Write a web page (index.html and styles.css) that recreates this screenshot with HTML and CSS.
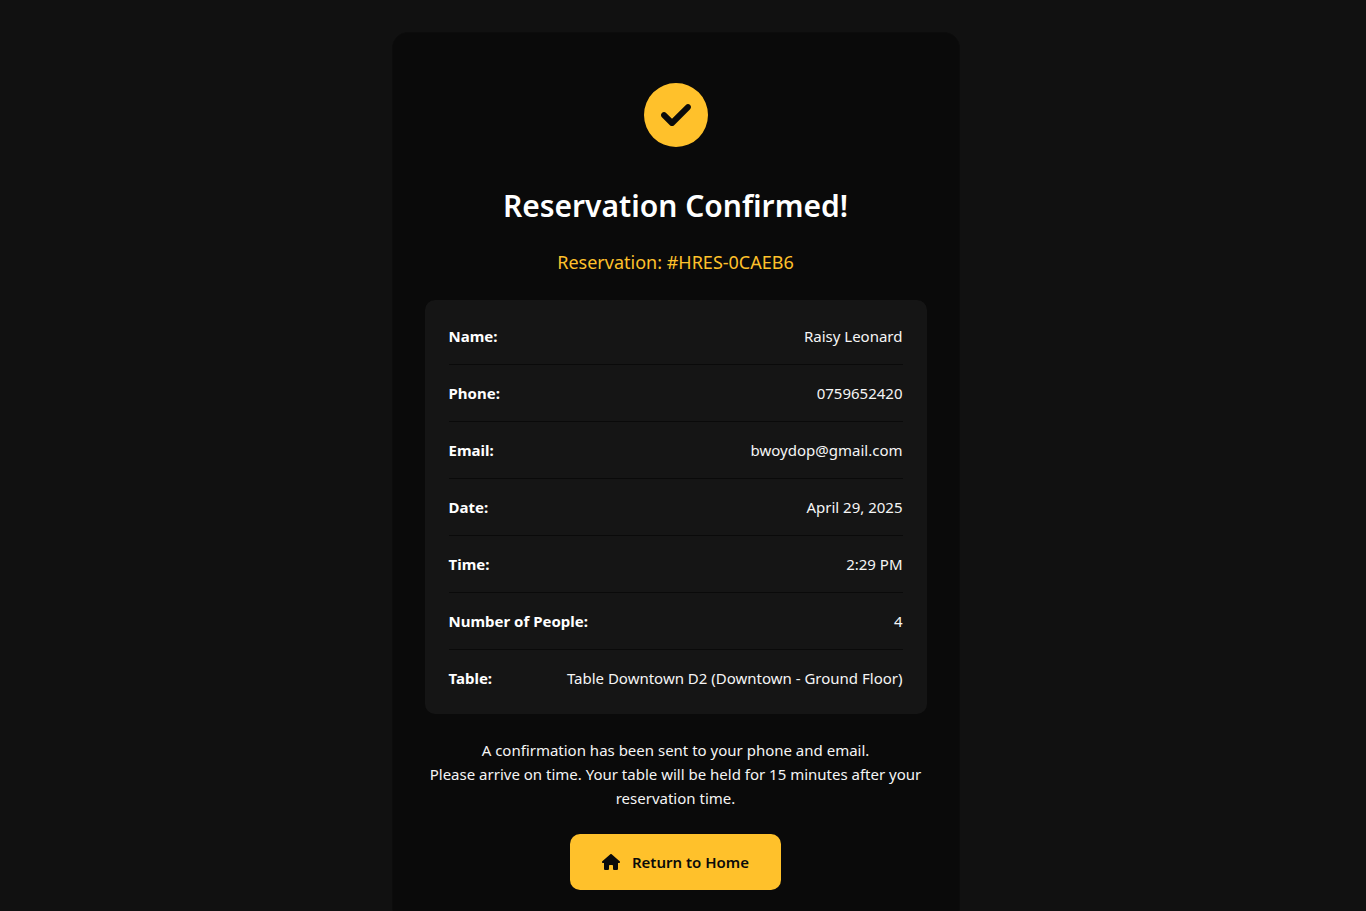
FILE: index.html
```html
<!DOCTYPE html>
<html lang="en">
<head>
  <meta charset="UTF-8">
  <title>Reservation Confirmed</title>
  <meta name="viewport" content="width=device-width, initial-scale=1">
  <link rel="stylesheet" href="styles.css">
</head>
<body>

<main class="confirmation">
  <!-- Success icon -->
  <div class="success-icon">
    <svg viewBox="0 0 512 512" aria-hidden="true">
      <path d="M256 512A256 256 0 1 0 256 0a256 256 0 1 0 0 512zM369 209L241 337c-9.4 9.4-24.6 9.4-33.9 0l-64-64c-9.4-9.4-9.4-24.6 0-33.9s24.6-9.4 33.9 0l47 47L335 175c9.4-9.4 24.6-9.4 33.9 0s9.4 24.6 0 33.9z"/>
    </svg>
  </div>

  <h1>Reservation Confirmed!</h1>
  <p class="reservation-id">Reservation: #HRES-0CAEB6</p>

  <!-- Reservation details -->
  <dl class="details">
    <div class="detail-row">
      <dt>Name:</dt>
      <dd>Raisy Leonard</dd>
    </div>
    <div class="detail-row">
      <dt>Phone:</dt>
      <dd>0759652420</dd>
    </div>
    <div class="detail-row">
      <dt>Email:</dt>
      <dd>bwoydop@gmail.com</dd>
    </div>
    <div class="detail-row">
      <dt>Date:</dt>
      <dd>April 29, 2025</dd>
    </div>
    <div class="detail-row">
      <dt>Time:</dt>
      <dd>2:29 PM</dd>
    </div>
    <div class="detail-row">
      <dt>Number of People:</dt>
      <dd>4</dd>
    </div>
    <div class="detail-row">
      <dt>Table:</dt>
      <dd>Table Downtown D2 (Downtown - Ground Floor)</dd>
    </div>
  </dl>

  <p class="note">
    A confirmation has been sent to your phone and email.<br>
    Please arrive on time. Your table will be held for 15 minutes after your reservation time.
  </p>

  <a href="#" class="btn-home">
    <svg viewBox="0 0 576 512" aria-hidden="true">
      <path d="M575.8 255.5c0 18-15 32.1-32 32.1h-32l.7 160.2c0 2.7-.2 5.4-.5 8.1V472c0 22.1-17.9 40-40 40H456c-1.1 0-2.2 0-3.3-.1c-1.4 .1-2.8 .1-4.2 .1H416 392c-22.1 0-40-17.9-40-40V448 384c0-17.7-14.3-32-32-32H256c-17.7 0-32 14.3-32 32v64 24c0 22.1-17.9 40-40 40H160 128.1c-1.5 0-3-.1-4.5-.2c-1.2 .1-2.4 .2-3.6 .2H104c-22.1 0-40-17.9-40-40V360c0-.9 0-1.9 .1-2.8V287.6H32c-18 0-32-14-32-32.1c0-9 3-17 10-24L266.4 8c7-7 15-8 22-8s15 2 21 7L564.8 231.5c8 7 12 15 11 24z"/>
    </svg>
    Return to Home
  </a>
</main>

</body>
</html>
```

FILE: styles.css
```css
:root {
  --page-bg: #111111;
  --card-bg: #0a0a0a;
  --panel-bg: #151515;
  --accent: #ffc12b;
  --text-main: #f5f5f5;
}

* {
  box-sizing: border-box;
}

body {
  margin: 0;
  padding: 32px 31px 32px 16px;
  background: var(--page-bg);
  color: var(--text-main);
  font-family: "Segoe UI", "Noto Sans", "Open Sans", sans-serif;
  font-size: 15px;
  line-height: 24px;
}

/* Card */
.confirmation {
  max-width: 568px;
  margin: 0 auto;
  padding: 32px;
  background: var(--card-bg);
  border: 1px solid #0c0c0c;
  border-radius: 16px;
  text-align: center;
}

.success-icon {
  padding: 18px 0;
  margin-bottom: 20px;
}
.success-icon svg {
  display: block;
  width: 64px;
  height: 64px;
  margin: 0 auto;
  fill: var(--accent);
}

h1 {
  margin: 0 0 22px;
  color: #fff;
  font-size: 30px;
  font-weight: 600;
  line-height: 42px;
}

.reservation-id {
  margin: 0 0 24px;
  color: var(--accent);
  font-size: 18px;
  line-height: 27px;
}

/* Details panel */
.details {
  margin: 0 0 24px;
  padding: 24px;
  background: var(--panel-bg);
  border-radius: 10px;
}
.detail-row {
  display: flex;
  justify-content: space-between;
  gap: 16px;
  padding-bottom: 16px;
  margin-bottom: 16px;
  border-bottom: 1px solid var(--card-bg);
}
.detail-row:last-child {
  padding-bottom: 0;
  margin-bottom: 0;
  border-bottom: none;
}
.detail-row dt {
  color: #fff;
  font-weight: 700;
}
.detail-row dd {
  margin: 0;
  text-align: right;
}

.note {
  margin: 0 0 24px;
}

/* Home button */
.btn-home {
  display: inline-flex;
  align-items: center;
  gap: 12px;
  padding: 16px 32px;
  background: var(--accent);
  border-radius: 10px;
  color: var(--card-bg);
  font-weight: 600;
  text-decoration: none;
}
.btn-home:hover {
  background: #e5ad26;
}
.btn-home svg {
  width: 18px;
  height: 16px;
  fill: currentColor;
}
```
